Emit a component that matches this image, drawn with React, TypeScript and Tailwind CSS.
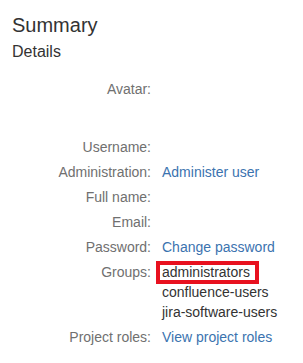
import React from "react";

type Row = {
  label: string;
  value?: React.ReactNode;
  tall?: boolean;
};

function Link({ children }: { children: React.ReactNode }) {
  return <a className="cursor-pointer text-[#3b73af] hover:underline">{children}</a>;
}

export default function App() {
  const rows: Row[] = [
    { label: "Avatar:", tall: true },
    { label: "Username:" },
    { label: "Administration:", value: <Link>Administer user</Link> },
    { label: "Full name:" },
    { label: "Email:" },
    { label: "Password:", value: <Link>Change password</Link> },
    {
      label: "Groups:",
      value: (
        <ul>
          <li className="relative">
            <span>administrators</span>
            {/* highlight box */}
            <span className="pointer-events-none absolute left-[-6px] top-[-1px] h-[23px] w-[103px] border-4 border-[#e8111f]" />
          </li>
          <li>confluence-users</li>
          <li>jira-software-users</li>
        </ul>
      ),
    },
    { label: "Project roles:", value: <Link>View project roles</Link> },
  ];

  return (
    <div
      className="min-h-[363px] w-[303px] bg-white px-[12px] pt-[13px] text-[#333333]"
      style={{ fontFamily: '"Liberation Sans", Arial, sans-serif' }}
    >
      <h2 className="text-[20px] leading-[24px]">Summary</h2>
      <h3 className="mt-[4.5px] text-[16px] leading-[20px]">Details</h3>

      <div className="mt-[17.5px] flex flex-col gap-[5px] text-[14px] leading-[20px]">
        {rows.map((r) => (
          <div key={r.label} className={`flex ${r.tall ? "h-[53px]" : ""}`}>
            <div className="w-[139px] shrink-0 text-right text-[#707070]">{r.label}</div>
            <div className="ml-[11px] min-w-0">{r.value}</div>
          </div>
        ))}
      </div>
    </div>
  );
}
